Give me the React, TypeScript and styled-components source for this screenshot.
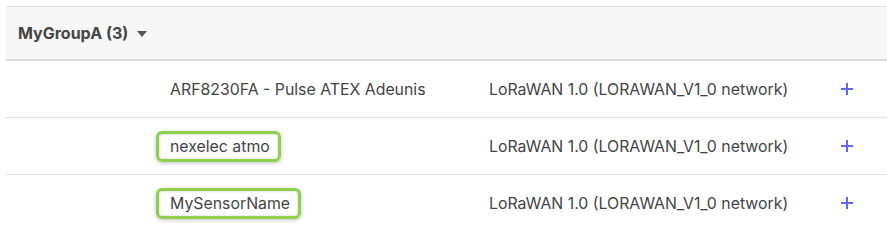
import { FC } from "react";
import styled, { createGlobalStyle } from "styled-components";

const GlobalStyle = createGlobalStyle`
    html, body {
        margin: 0;
        padding: 0;
        background: #ffffff;
    }
    body {
        font-family: Inter, "Noto Sans", sans-serif;
        color: #444444;
    }
`;

const Page = styled.div`
    padding: 6px 0 0 6px;
    width: 881px;
    height: 225px;
    overflow: hidden;
`;

const GroupHeader = styled.div`
    display: flex;
    align-items: center;
    gap: 9px;
    height: 52px;
    padding-left: 12px;
    background: #f7f7f7;
    border-top: 1px solid #e2e2e2;
    border-bottom: 2px solid #dddddd;
    font-size: 16px;
    font-weight: 700;
    color: #454545;
`;

const Caret = styled.span`
    width: 0;
    height: 0;
    border-left: 5px solid transparent;
    border-right: 5px solid transparent;
    border-top: 6px solid #555555;
    margin-top: 1px;
`;

const Row = styled.div`
    display: grid;
    grid-template-columns: 164px 319px 351px 1fr;
    align-items: center;
    height: 56px;
    border-bottom: 1px solid #e0e0e0;
    font-size: 15.85px;
    color: #444444;
`;

const Cell = styled.div`
    white-space: nowrap;
`;

const Highlight = styled.span<{ $on: boolean }>`
    display: inline-block;
    ${({ $on }) =>
        $on &&
        `
        padding: 3px 8px 3px 11px;
        margin: -6px -11px -6px -14px;
        border: 3px solid #8fd14f;
        border-radius: 6px;
        box-shadow: 0 1px 4px rgba(0, 0, 0, 0.25), inset 0 0 3px rgba(0, 0, 0, 0.2);
    `}
`;

const AddButton = styled.button`
    width: 14px;
    height: 14px;
    padding: 0;
    border: none;
    background: transparent;
    cursor: pointer;
    display: flex;
    align-items: center;
    justify-content: center;
`;

const Tail = styled.div`
    height: 6px;
    margin-top: 3px;
    background: linear-gradient(to right, #f8f8f8, #fdfdfd 30%, #ffffff);
`;

interface Device {
    name: string,
    network: string,
    highlighted: boolean,
}

const devices: Device[] = [
    { name: "ARF8230FA - Pulse ATEX Adeunis", network: "LoRaWAN 1.0 (LORAWAN_V1_0 network)", highlighted: false },
    { name: "nexelec atmo", network: "LoRaWAN 1.0 (LORAWAN_V1_0 network)", highlighted: true },
    { name: "MySensorName", network: "LoRaWAN 1.0 (LORAWAN_V1_0 network)", highlighted: true },
];

const PlusIcon: FC = () => (
    <svg width="14" height="14" viewBox="0 0 14 14">
        <path d="M7 1v12M1 7h12" stroke="#5b6af0" strokeWidth="2" fill="none" />
    </svg>
);

const App: FC = () => {
    return (
        <Page>
            <GlobalStyle />
            <GroupHeader>
                MyGroupA (3)
                <Caret />
            </GroupHeader>
            {devices.map((d) => (
                <Row key={d.name}>
                    <Cell />
                    <Cell>
                        <Highlight $on={d.highlighted}>{d.name}</Highlight>
                    </Cell>
                    <Cell>{d.network}</Cell>
                    <Cell>
                        <AddButton aria-label="Add">
                            <PlusIcon />
                        </AddButton>
                    </Cell>
                </Row>
            ))}
            <Tail />
        </Page>
    )
}

export default App;
